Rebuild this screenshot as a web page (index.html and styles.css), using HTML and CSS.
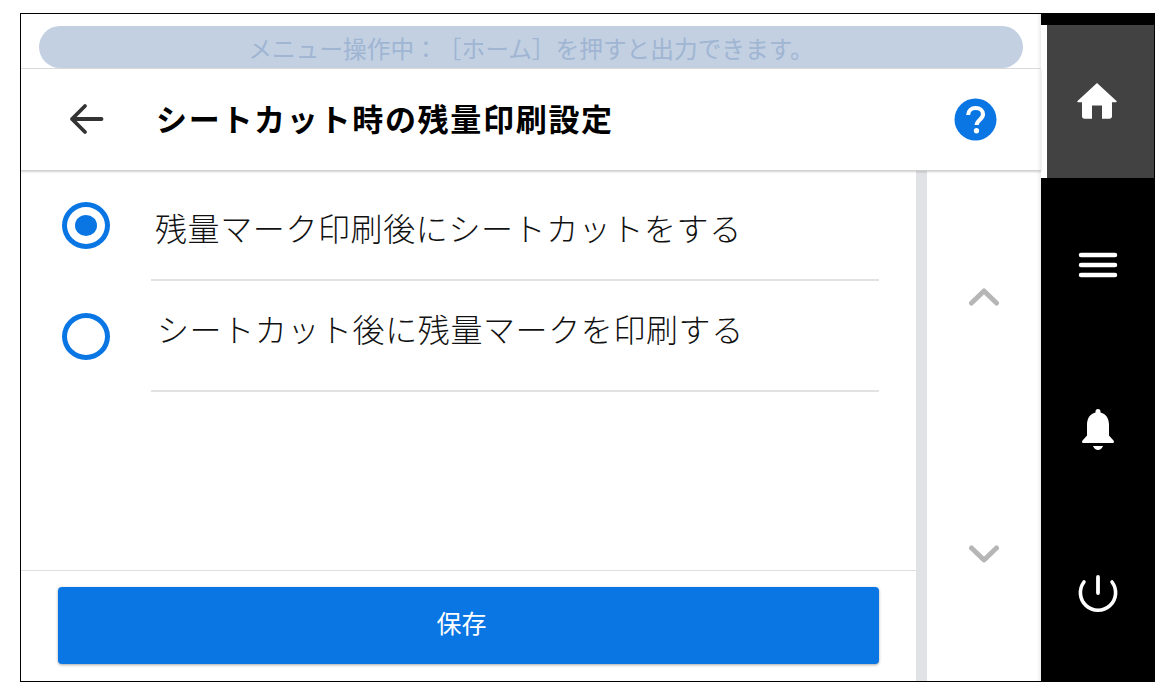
FILE: index.html
```html
<!DOCTYPE html>
<html lang="ja">
<head>
<meta charset="utf-8">
<title>シートカット時の残量印刷設定</title>
<link rel="stylesheet" href="styles.css">
</head>
<body>
<div class="frame">
  <main class="main">
    <div class="banner"><div class="pill">メニュー操作中：［ホーム］を押すと出力できます。</div></div>
    <header class="header">
      <svg class="back" viewBox="0 0 36 36"><path d="M33.500 18H4M17 5 4 18l13 13" fill="none" stroke="#333" stroke-width="3.800" stroke-linecap="round" stroke-linejoin="round"/></svg>
      <h1 class="title">シートカット時の残量印刷設定</h1>
      <svg class="help" viewBox="0 0 44 44"><circle cx="22" cy="22" r="21.500" fill="#0a76e4"/><path d="M14.500 17.500c0-4.500 3.200-7.300 7.700-7.300 4.400 0 7.500 2.700 7.500 6.500 0 5.500-6.500 5.500-6.500 11" fill="none" stroke="#fff" stroke-width="4.200"/><circle cx="23" cy="33.500" r="2.700" fill="#fff"/></svg>
    </header>
    <div class="body">
      <div class="content">
        <div class="list">
          <div class="row first">
            <span class="radio on"></span>
            <div class="label">残量マーク印刷後にシートカットをする</div>
          </div>
          <div class="row second">
            <span class="radio"></span>
            <div class="label">シートカット後に残量マークを印刷する</div>
          </div>
        </div>
        <div class="footer"><button class="save">保存</button></div>
      </div>
      <div class="track"></div>
      <div class="scroll">
        <svg class="chev" viewBox="0 0 32 20"><path d="M3.500 16 16 4l12.500 12" fill="none" stroke="#b6b6b6" stroke-width="5" stroke-linecap="round" stroke-linejoin="round"/></svg>
        <svg class="chev" viewBox="0 0 32 20"><path d="M3.500 4 16 16 28.500 4" fill="none" stroke="#b6b6b6" stroke-width="5" stroke-linecap="round" stroke-linejoin="round"/></svg>
      </div>
    </div>
  </main>
  <nav class="side">
    <div class="tile">
      <svg class="ico" viewBox="0 0 40 36"><path d="M20 0 39.500 18c.4.5.2 1.200-.5 1.200H35v14c0 1.500-1 2.500-2.500 2.500H25V22.500H15V35.700H7.500C6 35.700 5 34.700 5 33.200v-14H1c-.7 0-.9-.7-.5-1.200z" fill="#fff"/></svg>
    </div>
    <div class="item menu">
      <svg class="ico" viewBox="0 0 40 28"><path d="M3 4h34M3 14h34M3 24h34" stroke="#fff" stroke-width="4.500" stroke-linecap="round"/></svg>
    </div>
    <div class="item bell">
      <svg class="bellico" viewBox="0 0 34 42"><path d="M14.500 3.500a2.500 2.500 0 0 1 5 0v1c6 1.500 8.500 6.500 8.500 12.500v10.500l4.500 5c1 1.200.5 2.500-1 2.500h-29c-1.500 0-2-1.300-1-2.500l4.500-5V17c0-6 2.500-11 8.500-12.500z" fill="#fff"/><path d="M12 38h10c-1 2.500-3 4-5 4s-4-1.500-5-4z" fill="#fff"/></svg>
    </div>
    <div class="item power">
      <svg class="ico" viewBox="0 0 40 38"><path d="M6 7a17.600 17.600 0 1 0 28 0" fill="none" stroke="#fff" stroke-width="3.600" stroke-linecap="round"/><path d="M20 2v16" stroke="#fff" stroke-width="3.800" stroke-linecap="round"/></svg>
    </div>
  </nav>
</div>
</body>
</html>
```
FILE: styles.css
```css
* { box-sizing: border-box; }
html, body { margin: 0; height: 100%; background: #fff; overflow: hidden; }
body { font-family: "Noto Sans CJK JP", "Noto Sans", sans-serif; color: #111; text-spacing-trim: space-all; }

.frame {
  margin: 13px 0 0 20px;
  width: 1135px;
  height: 669px;
  border: solid #000;
  border-width: 1px 0 1px 1px;
  display: flex;
}

.main { width: 1020px; display: flex; flex-direction: column; box-shadow: inset -4px 0 4px -3px #e4e4e4; }

.banner { height: 55px; padding: 12px 18px 0; border-bottom: 1px solid #dcdcdc; }
.pill {
  width: 984px;
  height: 42px;
  border-radius: 21px;
  background: #c2d0e2;
  color: #9fb5d2;
  font-size: 23.700px;
  line-height: 44px;
  text-align: center;
}

.header {
  height: 102px;
  display: flex;
  align-items: center;
  padding: 0 44px 0 47px;
  border-bottom: 1px solid #d0d0d0;
  box-shadow: 0 1px 2px rgba(0,0,0,.18);
  position: relative;
}
.back { width: 36px; height: 36px; flex: none; margin-top: -1px; }
.title { flex: 1; margin: -4px 0 0 52px; font-size: 31px; line-height: 40px; font-weight: 700; color: #000; letter-spacing: 1.700px; }
.help { width: 43px; height: 43px; flex: none; }

.body { flex: 1; display: flex; min-height: 0; }
.content { width: 895px; display: flex; flex-direction: column; }
.list { flex: 1; }
.row { position: relative; margin-left: 130px; margin-right: 37px; border-bottom: 2px solid #e2e2e2; }
.row.first { height: 110px; }
.row.second { height: 111px; }
.label { font-size: 32px; line-height: 44px; font-weight: 300; color: #111; letter-spacing: .6px; }
.first .label { padding: 34px 0 0 4px; }
.second .label { padding: 25px 0 0 6px; }
.radio {
  position: absolute;
  left: -89px;
  width: 48px;
  height: 47px;
  border: 5px solid #0a76e4;
  border-radius: 50%;
  background: #fff;
}
.first .radio { top: 31px; }
.second .radio { top: 32px; }
.radio.on::after {
  content: "";
  position: absolute;
  left: 8px;
  top: 8px;
  width: 22px;
  height: 21px;
  border-radius: 50%;
  background: #0a76e4;
}

.footer { height: 111px; border-top: 1px solid #dedede; padding: 16px 37px 0 37px; }
.save {
  width: 100%;
  height: 77px;
  border: 0;
  border-radius: 4px;
  background: #0a76e4;
  color: #fff;
  font: 400 25px/1 "Noto Sans CJK JP", sans-serif;
  box-shadow: 0 1px 3px rgba(0,0,0,.35);
  padding: 0 14px 6px 0;
}

.track { width: 11px; background: #e0e2e5; }
.scroll { flex: 1; padding-top: 116px; display: flex; flex-direction: column; align-items: center; gap: 237px; }
.chev { width: 32px; height: 20px; flex: none; }

.side { width: 114px; background: #000; display: flex; flex-direction: column; }
.tile {
  margin-top: 11px;
  height: 153px;
  border-left: 6px solid #fff;
  border-right: 1px solid #000;
  background: #424242;
  display: flex;
  justify-content: center;
  padding: 58px 7px 0 0;
}
.ico { width: 40px; height: 36px; }
.item { display: flex; justify-content: center; padding-right: 1px; }
.menu { padding-top: 73px; }
.menu .ico { height: 28px; }
.bell { padding-top: 129px; }
.bellico { width: 34px; height: 42px; }
.power { padding-top: 125px; }
.power .ico { height: 38px; }
```
